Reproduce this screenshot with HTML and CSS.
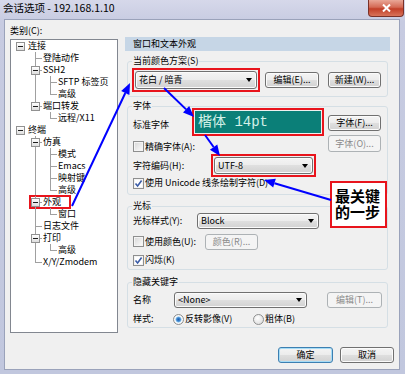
FILE: index.html
```html
<!DOCTYPE html>
<html lang="zh-CN">
  <head>
    <meta charset="UTF-8" />
    <title>会话选项</title>
    <link rel="stylesheet" href="styles.css">
  </head>
  <body>
    <div class="window">
      <div class="titlebar">
        <span class="title">会话选项 - 192.168.1.10</span>
        <span class="close">
          <svg width="9" height="8" viewBox="0 0 9 8"><path d="M1 0.5 L8 7.5 M8 0.5 L1 7.5" stroke="#fff" stroke-width="2" /></svg>
        </span>
      </div>
      <div class="client">
        <div class="main">
          <div class="left">
            <div class="cat-label">类别(C):</div>
            <div class="tree">
              <ul>
                <li><span class="node"><i class="box"></i>连接</span>
                  <ul>
                    <li><span class="node leaf">登陆动作</span></li>
                    <li><span class="node"><i class="box"></i>SSH2</span>
                      <ul>
                        <li><span class="node leaf">SFTP 标签页</span></li>
                        <li><span class="node leaf">高级</span></li>
                      </ul>
                    </li>
                    <li><span class="node"><i class="box"></i>端口转发</span>
                      <ul>
                        <li><span class="node leaf">远程/X11</span></li>
                      </ul>
                    </li>
                  </ul>
                </li>
                <li><span class="node"><i class="box"></i>终端</span>
                  <ul>
                    <li><span class="node"><i class="box"></i>仿真</span>
                      <ul>
                        <li><span class="node leaf">模式</span></li>
                        <li><span class="node leaf">Emacs</span></li>
                        <li><span class="node leaf">映射键</span></li>
                        <li><span class="node leaf">高级</span></li>
                      </ul>
                    </li>
                    <li><span class="node"><span class="mark"><i class="box"></i>外观</span></span>
                      <ul>
                        <li><span class="node leaf">窗口</span></li>
                      </ul>
                    </li>
                    <li><span class="node leaf">日志文件</span></li>
                    <li><span class="node"><i class="box"></i>打印</span>
                      <ul>
                        <li><span class="node leaf">高级</span></li>
                      </ul>
                    </li>
                    <li><span class="node leaf">X/Y/Zmodem</span></li>
                  </ul>
                </li>
              </ul>
            </div>
          </div>

          <div class="right">
            <div class="panel-title">窗口和文本外观</div>

            <fieldset class="group g1">
              <legend>当前颜色方案(S)</legend>
              <div class="row r-scheme">
                <span class="hl"><span class="combo w-scheme"><span>花白 / 暗青</span></span></span>
                <button class="btn b-edit">编辑(E)...</button>
                <button class="btn b-new">新建(W)...</button>
              </div>
            </fieldset>

            <fieldset class="group g2">
              <legend>字体</legend>
              <div class="font-body">
                <div class="font-left">
                  <div class="row r-font">
                    <span class="lbl l-font">标准字体</span>
                    <span class="hl"><span class="teal">楷体 14pt</span></span>
                  </div>
                  <div class="row r-exact">
                    <span class="chk"></span><span>精确字体(A):</span>
                  </div>
                  <div class="row r-enc">
                    <span class="lbl l-enc">字符编码(H):</span>
                    <span class="hl"><span class="combo w-enc"><span>UTF-8</span></span></span>
                  </div>
                  <div class="row r-uni">
                    <span class="chk on"><svg width="9" height="9" viewBox="0 0 9 9"><path d="M1.5 4.5 L3.6 7 L7.6 1.6" fill="none" stroke="#3a5ba6" stroke-width="1.6" /></svg></span><span>使用 Unicode 线条绘制字符(D)</span>
                  </div>
                </div>
                <div class="font-right">
                  <button class="btn b-font">字体(F)...</button>
                  <button class="btn b-font2" disabled>字体(O)...</button>
                </div>
              </div>
            </fieldset>

            <fieldset class="group g3">
              <legend>光标</legend>
              <div class="row r-cur">
                <span class="lbl l-cur">光标样式(Y):</span>
                <span class="combo w-cur"><span>Block</span></span>
              </div>
              <div class="row r-color">
                <span class="check-item ci-color"><span class="chk"></span><span>使用颜色(U):</span></span>
                <button class="btn b-color" disabled>颜色(R)...</button>
              </div>
              <div class="row r-blink">
                <span class="chk on"><svg width="9" height="9" viewBox="0 0 9 9"><path d="M1.5 4.5 L3.6 7 L7.6 1.6" fill="none" stroke="#3a5ba6" stroke-width="1.6" /></svg></span><span>闪烁(K)</span>
              </div>
            </fieldset>

            <fieldset class="group g4">
              <legend>隐藏关键字</legend>
              <div class="row r-name">
                <span class="lbl l-name">名称</span>
                <span class="combo w-name"><span>&lt;None&gt;</span></span>
                <button class="btn b-edit2" disabled>编辑(T)...</button>
              </div>
              <div class="row r-style">
                <span class="lbl l-style">样式:</span>
                <span class="radio-item ri-rev"><span class="radio on"></span><span>反转影像(V)</span></span>
                <span class="radio-item"><span class="radio"></span><span>粗体(B)</span></span>
              </div>
            </fieldset>
          </div>
        </div>

        <div class="footer">
          <button class="btn b-ok">确定</button>
          <button class="btn b-cancel">取消</button>
        </div>
      </div>

      <div class="callout">最关键<br>的一步</div>

      <svg class="arrows" width="405" height="374" viewBox="0 0 405 374">
        <g stroke="#0000ff" stroke-width="2" fill="none">
          <line x1="72" y1="206" x2="125.3" y2="93" />
          <line x1="164" y1="88" x2="186.1" y2="109.4" />
          <line x1="205" y1="135" x2="213.6" y2="147" />
          <line x1="331" y1="200" x2="274.5" y2="183.2" />
        </g>
        <g fill="#0000ff">
          <polygon points="130,83 129.4,94.9 121.2,91" />
          <polygon points="194,117 183,112.6 189.2,106.1" />
          <polygon points="220,156 209.9,149.7 217.3,144.4" />
          <polygon points="264,180 275.8,178.8 273.2,187.5" />
        </g>
      </svg>
    </div>
  </body>
</html>
```

FILE: styles.css
```css
html,
body {
  margin: 0;
  padding: 0;
}
body {
  font-family: 'Noto Sans CJK SC', 'Liberation Sans', sans-serif;
  font-size: 9px;
  color: #000;
  background: #c5cadf;
}
.window {
  position: relative;
  width: 405px;
  height: 374px;
  overflow: hidden;
  background: linear-gradient(180deg, #d6d8ea 0, #c7cbe1 22px, #c1c7de 100%);
}
.titlebar {
  display: flex;
  height: 19px;
}
.title {
  padding-left: 3px;
  font-size: 10.5px;
  line-height: 16px;
}
.close {
  margin-left: auto;
  margin-right: 1px;
  width: 36px;
  height: 17px;
  box-sizing: border-box;
  border: 1px solid #7a3128;
  border-top: 0;
  border-radius: 0 0 4px 4px;
  background: linear-gradient(#e9a797, #d46a55 45%, #c23f28 55%, #d8735a);
  display: flex;
  align-items: center;
  justify-content: center;
}
.client {
  margin: 0 5px 0 4px;
  height: 351px;
  box-sizing: border-box;
  border: 1px solid #9aa2ba;
  background: #f0f0f0;
  padding: 4px 0 0 5px;
}
.main {
  display: flex;
  height: 309px;
}
.left {
  width: 108px;
}
.cat-label {
  height: 15px;
  line-height: 14px;
}

/* 树 */
.tree {
  height: 294px;
  box-sizing: border-box;
  border: 1px solid #828790;
  background: #fff;
}
.tree ul {
  list-style: none;
  margin: 0;
  padding: 0;
}
.tree ul ul {
  padding-left: 15px;
}
.tree li {
  position: relative;
}
.tree ul ul > li::before {
  content: '';
  position: absolute;
  left: 9px;
  top: 0;
  bottom: 0;
  border-left: 1px solid #a0a0a0;
}
.tree ul ul > li:last-child::before {
  bottom: auto;
  height: 6px;
}
.tree ul ul > li::after {
  content: '';
  position: absolute;
  left: 9px;
  top: 6px;
  width: 7px;
  border-top: 1px solid #a0a0a0;
}
.node {
  display: flex;
  align-items: center;
  height: 12px;
  line-height: 12px;
  padding-left: 5px;
  white-space: nowrap;
}
.node.leaf {
  padding-left: 17px;
}
.box {
  position: relative;
  z-index: 1;
  width: 9px;
  height: 9px;
  box-sizing: border-box;
  margin-right: 3px;
  border: 1px solid #919191;
  background: linear-gradient(#fff, #dedede) content-box;
  background-color: #fff;
  display: flex;
  align-items: center;
  justify-content: center;
}
.box::after {
  content: '';
  width: 5px;
  border-top: 1px solid #1e1e1e;
}
.mark {
  display: flex;
  align-items: center;
  height: 10px;
  padding-right: 8px;
  outline: 2px solid #e8141c;
}

/* 右侧 */
.right {
  width: 265px;
  margin-left: 7px;
  padding-top: 13px;
}
.panel-title {
  height: 14px;
  line-height: 14px;
  padding-left: 8px;
  background: #c6d6e6;
}
.group {
  margin: 0 2px;
  padding: 0 5px;
  border: 1px solid #d5dfe5;
  border-radius: 3px;
  min-width: 0;
}
.group legend {
  padding: 0 1px;
  margin-left: -1px;
  height: 12px;
  line-height: 12px;
}
.g1 {
  margin-top: 4px;
  padding-bottom: 4px;
}
.g2 {
  margin-top: 3px;
  padding-bottom: 5px;
}
.g3 {
  margin-top: 5px;
  padding-bottom: 3px;
}
.g4 {
  margin-top: 6px;
  padding-bottom: 2px;
}
.row {
  display: flex;
  align-items: center;
  line-height: 12px;
  white-space: nowrap;
}
.lbl {
  flex: none;
}
.hl {
  display: flex;
  border: 2px solid #e8141c;
  padding: 1px;
}

/* 控件 */
.btn {
  font: inherit;
  height: 16px;
  box-sizing: border-box;
  padding: 0;
  line-height: 14px;
  color: #000;
  border: 1px solid #707070;
  border-radius: 3px;
  background: linear-gradient(#f4f4f4 0, #ececec 50%, #dfdfdf 50%, #d2d2d2 100%);
  box-shadow: inset 0 0 0 1px #fbfbfb;
}
.btn:disabled {
  color: #8b8b8b;
  border-color: #adb2b5;
  background: #f4f4f4;
  box-shadow: none;
}
.combo {
  display: flex;
  align-items: center;
  box-sizing: border-box;
  height: 16px;
  padding: 0 4px 0 3px;
  border: 1px solid #707070;
  border-radius: 3px;
  background: linear-gradient(#f4f4f4 0, #ececec 50%, #dfdfdf 50%, #d2d2d2 100%);
  box-shadow: inset 0 0 0 1px #fbfbfb;
}
.combo span {
  flex: 1;
}
.combo::after {
  content: '';
  border-left: 3px solid transparent;
  border-right: 3px solid transparent;
  border-top: 4px solid #000;
}
.chk {
  flex: none;
  width: 11px;
  height: 11px;
  box-sizing: border-box;
  margin-right: 1px;
  border: 1px solid #8e8f8f;
  background: linear-gradient(135deg, #d6d6d6, #fdfdfd);
  box-shadow: inset 0 0 0 1px #f4f4f4;
  display: flex;
  align-items: center;
  justify-content: center;
}
.chk.on {
  background: #fff;
}
.radio {
  flex: none;
  width: 11px;
  height: 11px;
  box-sizing: border-box;
  margin-right: 1px;
  border: 1px solid #8e8f8f;
  border-radius: 50%;
  background: radial-gradient(circle at 40% 35%, #fff, #d6d6d6);
}
.radio.on {
  background: radial-gradient(circle, #1f5fb0 0, #3d86d0 1.8px, #9ccdf0 2.8px, #fff 3.4px, #dcdcdc 100%);
}
.radio-item,
.check-item {
  display: flex;
  align-items: center;
  flex: none;
}

/* 颜色方案 */
.r-scheme {
  margin-top: 1px;
  height: 24px;
}
.r-scheme .hl {
  margin-left: -1px;
}
.w-scheme {
  width: 122px;
  height: 18px;
}
.b-edit {
  margin-left: 5px;
  width: 54px;
}
.b-new {
  margin-left: 9px;
  width: 53px;
}

/* 字体 */
.font-body {
  display: flex;
  margin-top: -4px;
}
.font-left {
  width: 191px;
}
.font-right {
  display: flex;
  flex-direction: column;
  margin-left: 4px;
}
.b-font {
  margin-top: 7px;
  width: 53px;
}
.b-font2 {
  margin-top: 4px;
  width: 53px;
  height: 17px;
}
.r-font {
  height: 28px;
}
.l-font {
  width: 59px;
  padding-top: 5px;
}
.teal {
  width: 126px;
  height: 22px;
  box-sizing: border-box;
  padding-left: 3px;
  background: #0b7f78;
  color: #d3f1e8;
  font-family: 'Liberation Mono', 'Noto Sans CJK SC', monospace;
  font-size: 14px;
  line-height: 22px;
}
.r-exact {
  margin-top: 3px;
  height: 15px;
}
.r-enc {
  height: 23px;
}
.l-enc {
  width: 78px;
}
.w-enc {
  width: 99px;
  height: 17px;
}
.r-uni {
  height: 12px;
}

/* 光标 */
.r-cur {
  margin-top: 1px;
  height: 16px;
}
.l-cur {
  width: 64px;
}
.w-cur {
  width: 122px;
}
.r-color {
  margin-top: 4px;
  height: 17px;
}
.ci-color {
  width: 72px;
}
.b-color {
  width: 53px;
}
.r-blink {
  margin-top: 4px;
  height: 12px;
}

/* 隐藏关键字 */
.r-name {
  margin-top: 4px;
  height: 16px;
}
.l-name {
  width: 41px;
}
.w-name {
  width: 133px;
}
.b-edit2 {
  margin-left: 20px;
  width: 55px;
}
.r-style {
  margin-top: 5px;
  height: 12px;
}
.l-style {
  width: 40px;
}
.ri-rev {
  width: 80px;
}

/* 底部按钮 */
.footer {
  display: flex;
  justify-content: flex-end;
  margin-top: 14px;
  padding-right: 5px;
}
.b-ok {
  width: 55px;
  margin-right: 7px;
  border-color: #3c7fb1;
  box-shadow: inset 0 0 0 1px #a6dcf6;
}
.b-cancel {
  width: 54px;
}

/* 标注 */
.callout {
  position: absolute;
  left: 330px;
  top: 181px;
  width: 57px;
  height: 47px;
  box-sizing: border-box;
  border: 2px solid #e8141c;
  background: #fff;
  padding: 5px 0 0 3px;
  font-size: 15px;
  font-weight: bold;
  line-height: 16px;
}
.arrows {
  position: absolute;
  left: 0;
  top: 0;
  pointer-events: none;
}
```
